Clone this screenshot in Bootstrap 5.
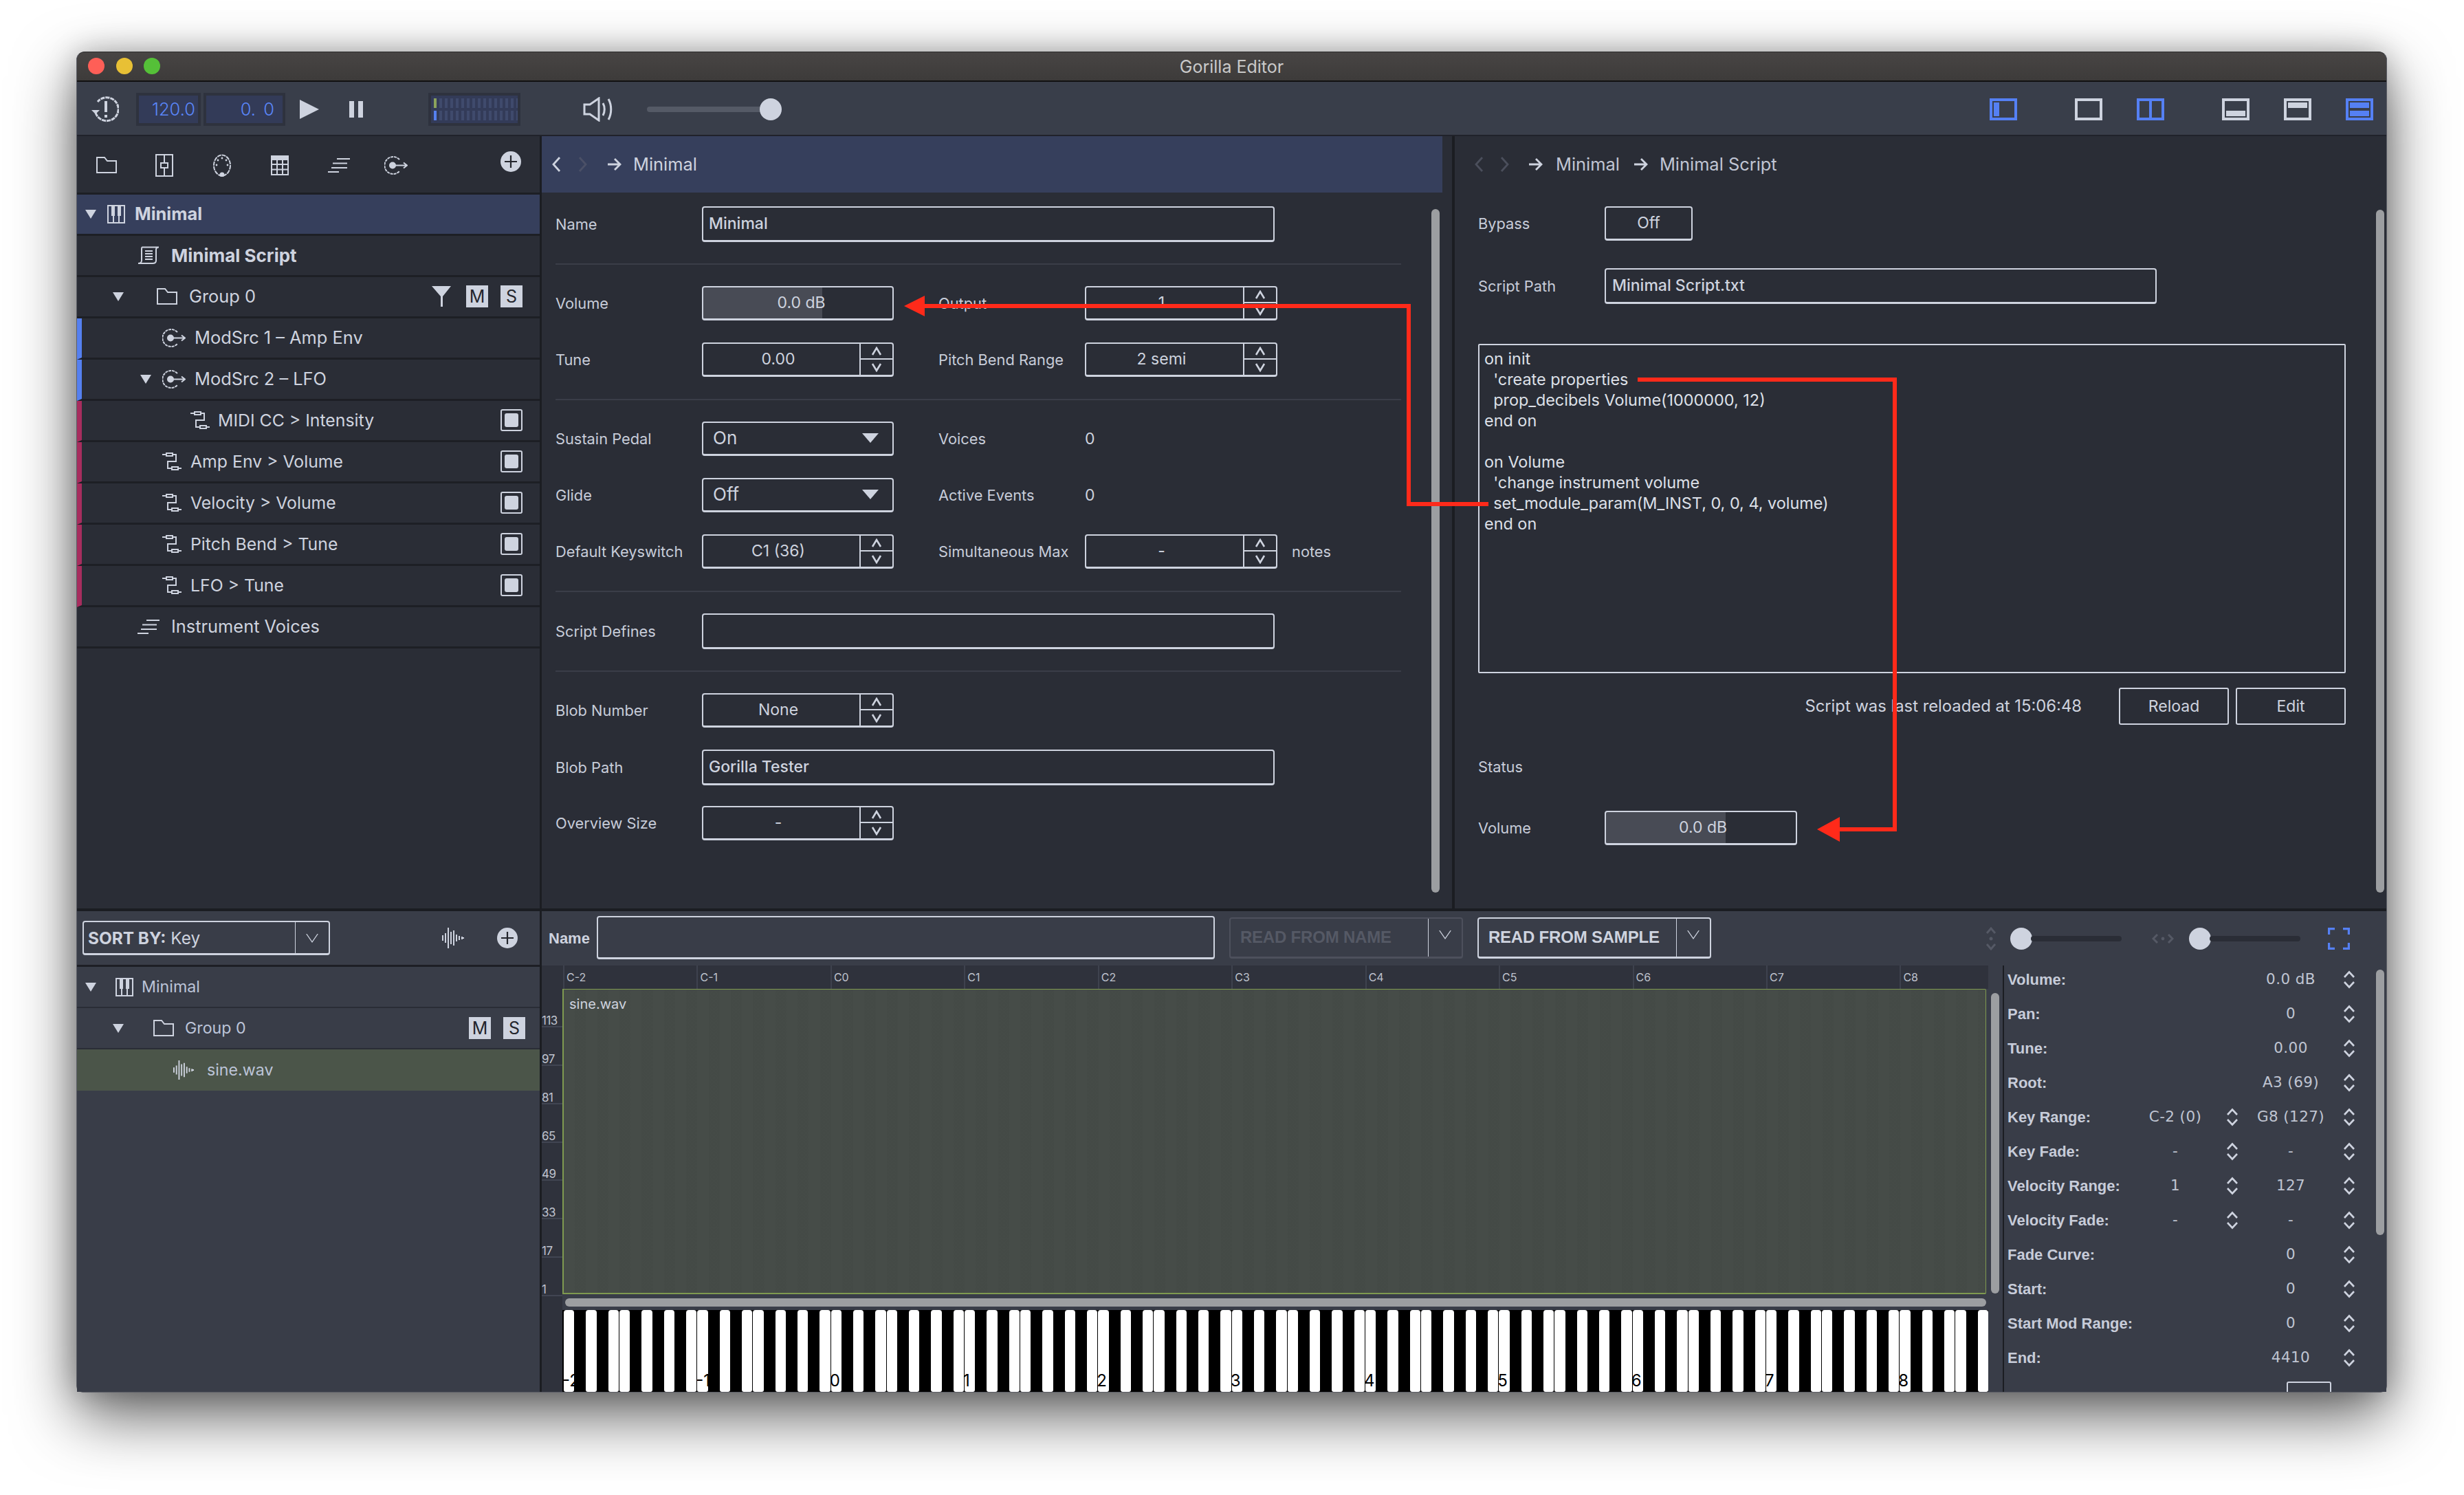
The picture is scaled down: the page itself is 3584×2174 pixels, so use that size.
<!DOCTYPE html>
<html lang="en">
<head>
  <meta charset="UTF-8">
  <title>Gorilla Editor</title>
  <link href="https://cdn.jsdelivr.net/npm/bootstrap@5.3.0/dist/css/bootstrap.min.css" rel="stylesheet">
  <style>
    html, body { margin: 0; height: 100%; background: #fff; overflow: hidden; }
    body { position: relative; font-family: Inter, "Noto Sans", sans-serif; color: #ced3df; font-size: 22px; }
    svg { display: block; flex-shrink: 0; }
    .ic-line { fill: none; stroke: #ced3df; stroke-width: 2; }
    .ic-fill { fill: #ced3df; }

    .app-win { position: absolute; left: 111px; top: 75px; width: 3361px; height: 1950px; border: 1px solid #5c5e66; border-top-color: #2a2a2a; border-radius: 12px 12px 10px 10px; box-shadow: 0 34px 90px rgba(0,0,0,.62), 0 0 40px rgba(0,0,0,.22); background: #2a2d36; }
    .title-bar { height: 43px; background: linear-gradient(#484544, #3d3b3a); border-bottom: 2px solid #111; display: grid; grid-template-columns: 1fr auto 1fr; align-items: center; font-size: 25px; color: #c9c9c9; border-radius: 11px 11px 0 0; }
    .title-bar > div:nth-child(2) { padding-top: 3px; }
    .lights { padding-left: 16px; gap: 16.5px; }
    .light { width: 24px; height: 24px; }
    .top-tools { height: 79px; background: #393e4a; border-bottom: 2px solid #20222a; padding: 3px 19px 0 0; }

    .tool-clock { margin-left: 21px; }
    .num-box { height: 48px; background: #2e323e; padding: 4px; font-size: 25.5px; color: #5a86f8; font-weight: 300; }
    .num-box > div { height: 100%; background: #333b58; text-align: right; line-height: 40px; }
    .tempo { width: 94px; margin-left: 25px; }
    .tempo > div { padding-right: 4px; }
    .beat { width: 119px; margin-left: 4px; word-spacing: 4px; }
    .beat > div { padding-right: 12px; }
    .tool-play { margin-left: 21px; }
    .tool-pause { margin-left: 44px; }
    .meter-box { width: 134px; height: 48px; margin-left: 94px; background: #2e323e; padding: 4px; }
    .meter-in { height: 40px; background: #333b58; padding: 4px 0 4px 4px; gap: 4px; }
    .meter-row { height: 14px; background: repeating-linear-gradient(90deg, #3f4a6c 0 4px, transparent 4px 8px); }
    .meter-row i { display: block; width: 4px; height: 14px; }
    .tool-vol { margin-left: 91px; }
    .vol-slider { margin-left: 47px; width: 196px; }
    .vol-track { width: 180px; height: 8px; background: #555a66; border-radius: 4px; }
    .knob { width: 32px; height: 32px; background: #ced3df; }
    .vol-slider .knob { margin-left: -16px; }
    .gap-l { margin-left: 84px; }
    .gap-s { margin-left: 50px; }

    .main-row { height: 1124px; }
    .split-v { width: 3px; background: #1b1d22; flex-shrink: 0; }
    .split-m { width: 4px; background: #1b1d22; flex-shrink: 0; }
    .split-h { height: 4px; background: #1b1d22; }
    .left-col { width: 673px; flex-shrink: 0; }
    .tree-tools { height: 85px; padding-left: 28px; position: relative; border-bottom: 3px solid #1d1f25; }
    .tree-tools svg { margin-top: 3px; }
    .tree-row { height: 60px; border-bottom: 3px solid #1d1f25; }
    .tree-row.on { background: #363f5c; font-weight: 700; }
    .tree-row.strong { font-weight: 700; font-size: 26px; }
    .tree-row { font-size: 25.4px; color: #ced3df; white-space: nowrap; }
    .tree-row.tight { font-size: 24.8px; }
    .mark-blue { border-left: 7px solid #5580f0; }
    .mark-red { border-left: 7px solid #a72d5e; }
    .tri { width: 0; height: 0; border-left: 8px solid transparent; border-right: 8px solid transparent; border-top: 13px solid #ced3df; flex-shrink: 0; }
    .sq-btn { width: 32px; height: 32px; background: #ced3df; color: #24262d; text-align: center; line-height: 32px; font-size: 25px; font-weight: 400; }
    .tog { width: 32px; height: 32px; border: 2px solid #ced3df; border-radius: 3px; padding: 4px; }
    .tog i { display: block; width: 100%; height: 100%; background: #ced3df; border-radius: 3px; }
    .row-end { margin-left: auto; margin-right: 25px; gap: 18px; }
    .funnel-gap { margin-right: 4px; }

    .mid-col { width: 1324px; flex-shrink: 0; }
    .right-col { flex-grow: 1; }
    .crumb-bar { height: 82px; width: 1310px; background: #363f5c; padding-left: 14px; font-size: 25.4px; }
    .crumb-bar.plain { background: transparent; width: auto; padding-left: 28px; color: #c0c5d3; }
    .form-wrap { padding: 20px 0 0 20px; }
    .f-row { margin-bottom: 32px; height: 50px; }
    .f-row.tall { height: 52px; }
    .f-label { width: 213px; flex-shrink: 0; font-size: 21.8px; color: #c7ccd9; white-space: nowrap; }
    .f-rule { height: 2px; width: 1230px; background: #3a3d48; margin: -1px 0 31px; }
    .f-rule.low { margin-top: 1px; }
    .f-box { border: 2px solid #ced3df; border-bottom-width: 3px; border-radius: 4px; font-size: 23px; line-height: 1; }
    .f-text { width: 833px; height: 100%; padding-left: 8px; font-weight: 500; }
    .f-sel { width: 279px; height: 100%; padding: 0 20px 0 14px; font-size: 26px; }
    .sel-tri { border-left-width: 12px; border-right-width: 12px; border-top-width: 14px; }
    .f-spin { width: 280px; height: 100%; }
    .spin-val { flex-grow: 1; text-align: center; padding-right: 9px; }
    .spin-btns { width: 48px; border-left: 2px solid #ced3df; }
    .spin-btns > div { flex: 1 1 0; }
    .spin-btns > div:first-child { border-bottom: 2px solid #ced3df; }
    .f-bar { width: 279px; height: 100%; background: linear-gradient(90deg, #484b55 0 63%, transparent 63%); padding-left: 10px; font-size: 23px; }
    .col-two { margin-left: 65px; }
    .f-note { margin-left: 21px; font-size: 21.8px; color: #c7ccd9; }
    .f-plain { font-size: 23px; }

    .r-form { padding: 20px 59px 0 34px; }
    .r-row { margin-bottom: 40px; height: 50px; }
    .r-btn { width: 128px; height: 100%; }
    .r-text { width: 803px; height: 52px; padding-left: 9px; font-weight: 500; }
    .script-box { height: 479px; margin-top: 58px; border: 2px solid #ced3df; border-radius: 2px; padding: 5px 7px; font-size: 23.4px; line-height: 30px; white-space: pre; color: #dde0e8; }
    .script-foot { margin-top: 21px; height: 54px; gap: 10px; }
    .script-note { margin-right: 44px; font-size: 23.8px; }
    .foot-btn { width: 160px; height: 100%; padding: 0; background: transparent; border: 2px solid #ced3df; border-radius: 3px; color: #ced3df; font-size: 23px; }
    .status-line { margin-top: 46px; height: 30px; }
    .vol-line { margin-top: 49px; height: 50px; }
    .r-bar { width: 280px; height: 100%; background: linear-gradient(90deg, #484b55 0 63%, transparent 63%); padding-left: 106px; }

    .thumb { position: absolute; background: #9c9ea1; border-radius: 6px; width: 12px; }
    .thumb-mid { left: 2082px; top: 304px; height: 994px; }
    .thumb-right { left: 3456px; top: 305px; height: 993px; }
    .thumb-props { left: 3456px; top: 1410px; height: 386px; }
    .thumb-grid { left: 2896px; top: 1444px; height: 437px; }

    .bottom-row { flex-grow: 1; background: #393d48; min-height: 0; }
    .bot-left { width: 673px; flex-shrink: 0; }
    .bot-tools { height: 81px; border-bottom: 3px solid #1d1f25; padding-left: 8px; }
    .drop { border: 2px solid #ced3df; border-bottom-width: 3px; border-radius: 4px; white-space: nowrap; }
    .sort-drop { width: 360px; height: 50px; font-size: 24.4px; padding-left: 6px; }
    .drop-arrow { border-left: 1px solid #ced3df; height: 100%; margin-left: auto; width: 49px; flex-shrink: 0; }
    .bot-row { height: 60px; border-bottom: 2px solid #2a2d36; font-size: 23.2px; color: #bcc4d8; white-space: nowrap; }
    .bot-row.sel { background: #4b5549; border-bottom: 0; }

    .bot-right { flex-grow: 1; min-width: 0; }
    .edit-tools { height: 79px; padding-left: 10px; flex-shrink: 0; }
    .name-lab { font-family: "Liberation Sans", sans-serif; font-size: 22px; }
    .name-box { width: 899px; height: 63px; margin-left: 10px; margin-top: -2px; }
    .read-drop { width: 340px; height: 60px; font-weight: 700; font-size: 24px; font-family: "Liberation Sans", sans-serif; padding-left: 14px; margin-top: -2px; letter-spacing: -.2px; }
    .read-drop.off { margin-left: 21px; border-color: #4d505c; color: #555965; }
    .read-drop.off .drop-arrow { border-left-color: #ced3df; }
    .read-drop.act { margin-left: 21px; }
    .read-drop .drop-arrow { width: 49px; }
    .zoom-slider { width: 162px; }
    .zoom-track { height: 8px; background: #2a2d36; border-radius: 4px; flex-grow: 1; margin-left: -2px; }

    .edit-body { flex-grow: 1; min-height: 0; }
    .key-col { width: 30px; flex-shrink: 0; background: #2f323c; font-size: 17px; color: #bfc3ce; }
    .key-col .key-head { height: 34px; }
    .key-num { height: 55.8px; border-bottom: 2px solid #414552; line-height: .7; padding: 0 0 1px 0; letter-spacing: -.5px; }
    .edit-main { width: 2074px; flex-shrink: 0; overflow: hidden; }
    .ruler { height: 34px; background: #2f323c; font-size: 16px; color: #bfc3ce; padding-left: 1px; }
    .ruler > div { width: 194.45px; flex-shrink: 0; border-left: 2px solid #3e424e; padding-left: 3px; }
    .grid-area { height: 444px; margin-right: 3px; border: 2px solid #7f9a50; border-top-width: 1px; border-right-width: 1px; border-radius: 0 2px 2px 0; background-color: #454b47; background-image: repeating-linear-gradient(90deg, rgba(255,255,255,.007) 0 16.2px, rgba(0,0,0,.009) 16.2px 32.4px); font-size: 20px; padding: 6px 8px; color: #ced3df; }
    .pad-hs { height: 23px; padding: 6px 3px 5px 4px; }
    .hs-thumb { height: 12px; background: #9c9ea1; border-radius: 6px; }
    .piano { height: 119px; background: #000; padding-left: 2px; color: #000; font-size: 24px; }
    .p-key { width: 15.3px; height: 100%; background: #fff; border-radius: 4px 4px 3px 3px; flex-shrink: 0; white-space: nowrap; padding-bottom: 2px; line-height: 1.2; }
    .p-label { display: inline-block; margin-left: -2px; }
    .scroll-col { width: 21px; flex-shrink: 0; }
    .split-p { width: 2px; background: #1b1d22; flex-shrink: 0; }
    .props { flex-grow: 1; overflow: hidden; position: relative; padding-left: 5px; margin-top: -5px; }
    .prop-row { display: grid; grid-template-columns: 170px 148px 18px 152px 18px; height: 50px; align-items: center; white-space: nowrap; }
    .prop-name { font-family: "Liberation Sans", sans-serif; font-weight: 700; font-size: 22px; color: #c7ccd9; }
    .prop-val { font-family: "DejaVu Sans", sans-serif; font-size: 21.5px; letter-spacing: .4px; color: #bfc4d1; text-align: center; }
    .prop-val.two { grid-column: 4; }
    .ud { grid-column: 5; }
    .ud.first { grid-column: 3; }
    .cut-box { position: absolute; left: 411px; top: 610px; width: 65px; height: 40px; border: 2px solid #ced3df; border-radius: 3px; }
    .arrows { position: absolute; left: 0; top: 0; z-index: 5; pointer-events: none; }
  </style>
</head>
<body>

  <svg width="0" height="0" style="position:absolute">
    <symbol id="i-folder" viewBox="0 0 30 24"><path class="ic-line" d="M1 1H12L16 6H29V23H1Z"/></symbol>
    <symbol id="i-fader" viewBox="0 0 26 33"><path class="ic-line" d="M1 1H25V32H1ZM13 1V13M13 20V32M8 13H18V20H8Z"/></symbol>
    <symbol id="i-midi" viewBox="0 0 26 33"><ellipse class="ic-line" cx="13" cy="16.5" rx="12" ry="15" stroke-dasharray="6 1"/><circle class="ic-fill" cx="13" cy="30" r="3.5"/><circle class="ic-fill" cx="13" cy="6" r="1.4"/><circle class="ic-fill" cx="7" cy="9" r="1.4"/><circle class="ic-fill" cx="19" cy="9" r="1.4"/><circle class="ic-fill" cx="5" cy="16" r="1.4"/><circle class="ic-fill" cx="21" cy="16" r="1.4"/></symbol>
    <symbol id="i-table" viewBox="0 0 26 29"><rect class="ic-fill" x="0" y="0" width="26" height="7"/><path class="ic-line" d="M1 6H25V28H1ZM1 13H25M1 20.5H25M9 6V28M17 6V28"/></symbol>
    <symbol id="i-lines" viewBox="0 0 32 23"><path class="ic-line" d="M13 2H32M7 8.5H28M5 15H28M0 21H16" stroke-width="2.4"/></symbol>
    <symbol id="i-mod" viewBox="0 0 34 27"><path class="ic-line" stroke-dasharray="4 1" d="M22 5A12.5 12.5 0 1 0 22 22"/><circle class="ic-fill" cx="12" cy="13.5" r="5"/><path class="ic-line" d="M12 13.5H32M28 9.5L33 13.5L28 17.5"/></symbol>
    <symbol id="i-link" viewBox="0 0 28 26"><path class="ic-line" d="M0 3H5M6 1H15V5H6ZM15 3H20V13H8V23H13M14 21H23V25H14ZM23 23H28" stroke-width="1.8"/></symbol>
    <symbol id="i-script" viewBox="0 0 32 26"><path class="ic-line" d="M7 1.5H31C28 1.5 27 3 27 5V21C27 23.5 25 25 22 25H1C4 25 6 23 6 21V4C6 2.5 6.5 1.5 7 1.5ZM11 7H22M11 11H22M11 15H22M11 19H22"/></symbol>
    <symbol id="i-piano" viewBox="0 0 26 27"><path class="ic-line" d="M1 1H25V26H1ZM9 16V26M17 16V26"/><path class="ic-fill" d="M6 1H11V16H6ZM15 1H20V16H15Z"/></symbol>
    <symbol id="i-wave" viewBox="0 0 32 30"><path class="ic-line" stroke-width="1.6" d="M1 11V19M5 8V22M9 0V30M13 6V24M17 4V26M21 10V20M25 12V18M29 13V17M31 14V16"/></symbol>
    <symbol id="i-plus" viewBox="0 0 30 30"><circle class="ic-fill" cx="15" cy="15" r="15"/><path d="M15 6V24M6 15H24" stroke="#24262d" stroke-width="2.2"/></symbol>
    <symbol id="i-funnel" viewBox="0 0 28 30"><path class="ic-fill" d="M0 0H28L16 15V30H13V15Z"/></symbol>
    <symbol id="i-up" viewBox="0 0 16 14"><path d="M2 12L8 2L14 12" fill="none" stroke="#ced3df" stroke-width="2.6"/></symbol>
    <symbol id="i-down" viewBox="0 0 16 14"><path d="M2 2L8 12L14 2" fill="none" stroke="#ced3df" stroke-width="2.6"/></symbol>
    <symbol id="i-ud" viewBox="0 0 18 27"><path d="M2 10L9 2.5L16 10M2 17L9 24.5L16 17" fill="none" stroke="#ced3df" stroke-width="2.6"/></symbol>
    <symbol id="i-vee" viewBox="0 0 22 24"><path d="M2 2L11 22L20 2" fill="none" stroke="#ced3df" stroke-width="1.6"/></symbol>
    <symbol id="i-back" viewBox="0 0 14 24"><path d="M12 2L3 12L12 22" fill="none" stroke="currentColor" stroke-width="2.8"/></symbol>
    <symbol id="i-fwd" viewBox="0 0 14 24"><path d="M2 2L11 12L2 22" fill="none" stroke="currentColor" stroke-width="2.8"/></symbol>
    <symbol id="i-right" viewBox="0 0 22 22"><path d="M1 11H19M11 3L19 11L11 19" fill="none" stroke="#ced3df" stroke-width="2.8"/></symbol>
  </svg>

  <div class="app-win d-flex flex-column">

    <div class="title-bar">
      <div class="lights d-flex">
        <div class="light rounded-circle" style="background:#fe5f57"></div>
        <div class="light rounded-circle" style="background:#e8c035"></div>
        <div class="light rounded-circle" style="background:#55c038"></div>
      </div>
      <div>Gorilla Editor</div>
      <div></div>
    </div>

    <div class="top-tools d-flex align-items-center">
      <svg class="tool-clock" width="40" height="42" viewBox="0 0 40 42">
        <path d="M6 26A17 17 0 1 0 9 10" fill="none" stroke="#ced3df" stroke-width="3" stroke-dasharray="6 1"/>
        <path class="ic-fill" d="M0 22L6 28L12 22Z"/>
        <path class="ic-fill" d="M19 9H23V25H19ZM19 29H23V33H19Z"/>
      </svg>
      <div class="num-box tempo"><div>120.0</div></div>
      <div class="num-box beat"><div>0. 0</div></div>
      <svg class="tool-play" width="28" height="28" viewBox="0 0 28 28"><path class="ic-fill" d="M0 0L28 14L0 28Z"/></svg>
      <svg class="tool-pause" width="21" height="24" viewBox="0 0 21 24"><path class="ic-fill" d="M0 0H7V24H0ZM13 0H20V24H13Z"/></svg>
      <div class="meter-box">
        <div class="meter-in d-flex flex-column">
          <div class="meter-row"><i style="background:#8ba35c"></i></div>
          <div class="meter-row"><i style="background:#5580f0"></i></div>
        </div>
      </div>
      <svg class="tool-vol" width="46" height="36" viewBox="0 0 46 36">
        <path d="M2 11H10L23 2V34L10 25H2Z" fill="none" stroke="#ced3df" stroke-width="3"/>
        <path d="M29 9C32 14 32 22 29 27M37 3C42 12 42 24 37 33" fill="none" stroke="#ced3df" stroke-width="3"/>
      </svg>
      <div class="vol-slider d-flex align-items-center">
        <div class="vol-track"></div>
        <div class="knob rounded-circle"></div>
      </div>

      <svg class="ms-auto" width="40" height="32" viewBox="0 0 40 32"><rect x="2" y="2" width="36" height="28" fill="none" stroke="#5580f4" stroke-width="4"/><rect x="6" y="6" width="8" height="20" fill="#5580f4"/></svg>
      <svg class="gap-l" width="40" height="32" viewBox="0 0 40 32"><rect x="2" y="2" width="36" height="28" fill="none" stroke="#ced3df" stroke-width="4"/></svg>
      <svg class="gap-s" width="40" height="32" viewBox="0 0 40 32"><rect x="2" y="2" width="36" height="28" fill="none" stroke="#5580f4" stroke-width="4"/><rect x="18" y="2" width="4" height="28" fill="#5580f4"/></svg>
      <svg class="gap-l" width="40" height="32" viewBox="0 0 40 32"><rect x="2" y="2" width="36" height="28" fill="none" stroke="#ced3df" stroke-width="4"/><rect x="6" y="18" width="28" height="8" fill="#ced3df"/></svg>
      <svg class="gap-s" width="40" height="32" viewBox="0 0 40 32"><rect x="2" y="2" width="36" height="28" fill="none" stroke="#ced3df" stroke-width="4"/><rect x="6" y="6" width="28" height="8" fill="#ced3df"/></svg>
      <svg class="gap-s" width="40" height="32" viewBox="0 0 40 32"><rect x="2" y="2" width="36" height="28" fill="none" stroke="#5580f4" stroke-width="4"/><rect x="6" y="6" width="28" height="8" fill="#5580f4"/><rect x="6" y="18" width="28" height="8" fill="#5580f4"/></svg>
    </div>

    <div class="main-row d-flex">
      <!-- instrument tree -->
      <div class="left-col">
        <div class="tree-tools d-flex align-items-center">
          <svg width="30" height="24"><use href="#i-folder"/></svg>
          <svg width="26" height="33" style="margin-left:56px"><use href="#i-fader"/></svg>
          <svg width="26" height="33" style="margin-left:58px"><use href="#i-midi"/></svg>
          <svg width="26" height="29" style="margin-left:58px"><use href="#i-table"/></svg>
          <svg width="32" height="23" style="margin-left:57px"><use href="#i-lines"/></svg>
          <svg width="34" height="27" style="margin-left:50px"><use href="#i-mod"/></svg>
          <svg class="ms-auto" width="30" height="30" style="margin-right:27px;margin-top:-7px"><use href="#i-plus"/></svg>
        </div>
        <div class="tree-row on d-flex align-items-center" style="padding-left:12px">
          <div class="tri"></div>
          <svg width="26" height="27" style="margin:0 14px 0 16px"><use href="#i-piano"/></svg>
          <span>Minimal</span>
        </div>
        <div class="tree-row strong d-flex align-items-center" style="padding-left:88px">
          <svg width="32" height="26" style="margin-right:17px"><use href="#i-script"/></svg>
          <span>Minimal Script</span>
        </div>
        <div class="tree-row d-flex align-items-center" style="padding-left:52px">
          <div class="tri"></div>
          <svg width="30" height="24" style="margin:0 17px 0 48px"><use href="#i-folder"/></svg>
          <span>Group 0</span>
          <div class="row-end d-flex align-items-center">
            <svg class="funnel-gap" width="28" height="30"><use href="#i-funnel"/></svg>
            <div class="sq-btn">M</div>
            <div class="sq-btn">S</div>
          </div>
        </div>
        <div class="tree-row mark-blue d-flex align-items-center" style="padding-left:117px">
          <svg width="34" height="27" style="margin-right:13px"><use href="#i-mod"/></svg>
          <span>ModSrc 1 – Amp Env</span>
        </div>
        <div class="tree-row mark-blue d-flex align-items-center" style="padding-left:85px">
          <div class="tri"></div>
          <svg width="34" height="27" style="margin:0 13px 0 16px"><use href="#i-mod"/></svg>
          <span>ModSrc 2 – LFO</span>
        </div>
        <div class="tree-row tight mark-red d-flex align-items-center" style="padding-left:158px">
          <svg width="28" height="26" style="margin-right:12px"><use href="#i-link"/></svg>
          <span>MIDI CC &gt; Intensity</span>
          <div class="row-end"><div class="tog"><i></i></div></div>
        </div>
        <div class="tree-row tight mark-red d-flex align-items-center" style="padding-left:117px">
          <svg width="28" height="26" style="margin-right:13px"><use href="#i-link"/></svg>
          <span>Amp Env &gt; Volume</span>
          <div class="row-end"><div class="tog"><i></i></div></div>
        </div>
        <div class="tree-row tight mark-red d-flex align-items-center" style="padding-left:117px">
          <svg width="28" height="26" style="margin-right:13px"><use href="#i-link"/></svg>
          <span>Velocity &gt; Volume</span>
          <div class="row-end"><div class="tog"><i></i></div></div>
        </div>
        <div class="tree-row tight mark-red d-flex align-items-center" style="padding-left:117px">
          <svg width="28" height="26" style="margin-right:13px"><use href="#i-link"/></svg>
          <span>Pitch Bend &gt; Tune</span>
          <div class="row-end"><div class="tog"><i></i></div></div>
        </div>
        <div class="tree-row tight mark-red d-flex align-items-center" style="padding-left:117px">
          <svg width="28" height="26" style="margin-right:13px"><use href="#i-link"/></svg>
          <span>LFO &gt; Tune</span>
          <div class="row-end"><div class="tog"><i></i></div></div>
        </div>
        <div class="tree-row d-flex align-items-center" style="padding-left:88px">
          <svg width="32" height="23" style="margin-right:17px"><use href="#i-lines"/></svg>
          <span>Instrument Voices</span>
        </div>
      </div>

      <div class="split-v"></div>

      <!-- instrument properties -->
      <div class="mid-col">
        <div class="crumb-bar d-flex align-items-center">
          <svg width="14" height="24" style="color:#ced3df"><use href="#i-back"/></svg>
          <svg width="14" height="24" style="margin-left:25px;color:#4b5067"><use href="#i-fwd"/></svg>
          <svg width="22" height="22" style="margin:0 16px 0 28px"><use href="#i-right"/></svg>
          <span>Minimal</span>
        </div>
        <div class="form-wrap">
          <div class="f-row tall d-flex align-items-center">
            <div class="f-label">Name</div>
            <div class="f-box f-text d-flex align-items-center">Minimal</div>
          </div>
          <div class="f-rule"></div>

          <div class="f-row d-flex align-items-center">
            <div class="f-label">Volume</div>
            <div class="f-box f-bar d-flex align-items-center justify-content-center">0.0 dB</div>
            <div class="f-label col-two">Output</div>
            <div class="f-box f-spin d-flex">
              <div class="spin-val align-self-center">1</div>
              <div class="spin-btns d-flex flex-column">
                <div class="d-flex align-items-center justify-content-center"><svg width="16" height="14"><use href="#i-up"/></svg></div>
                <div class="d-flex align-items-center justify-content-center"><svg width="16" height="14"><use href="#i-down"/></svg></div>
              </div>
            </div>
          </div>
          <div class="f-row d-flex align-items-center">
            <div class="f-label">Tune</div>
            <div class="f-box f-spin d-flex" style="width:279px">
              <div class="spin-val align-self-center">0.00</div>
              <div class="spin-btns d-flex flex-column">
                <div class="d-flex align-items-center justify-content-center"><svg width="16" height="14"><use href="#i-up"/></svg></div>
                <div class="d-flex align-items-center justify-content-center"><svg width="16" height="14"><use href="#i-down"/></svg></div>
              </div>
            </div>
            <div class="f-label col-two">Pitch Bend Range</div>
            <div class="f-box f-spin d-flex">
              <div class="spin-val align-self-center">2 semi</div>
              <div class="spin-btns d-flex flex-column">
                <div class="d-flex align-items-center justify-content-center"><svg width="16" height="14"><use href="#i-up"/></svg></div>
                <div class="d-flex align-items-center justify-content-center"><svg width="16" height="14"><use href="#i-down"/></svg></div>
              </div>
            </div>
          </div>
          <div class="f-rule low"></div>

          <div class="f-row d-flex align-items-center">
            <div class="f-label">Sustain Pedal</div>
            <div class="f-box f-sel d-flex align-items-center justify-content-between"><span>On</span><div class="tri sel-tri"></div></div>
            <div class="f-label col-two">Voices</div>
            <div class="f-plain">0</div>
          </div>
          <div class="f-row d-flex align-items-center">
            <div class="f-label">Glide</div>
            <div class="f-box f-sel d-flex align-items-center justify-content-between"><span>Off</span><div class="tri sel-tri"></div></div>
            <div class="f-label col-two">Active Events</div>
            <div class="f-plain">0</div>
          </div>
          <div class="f-row d-flex align-items-center">
            <div class="f-label">Default Keyswitch</div>
            <div class="f-box f-spin d-flex" style="width:279px">
              <div class="spin-val align-self-center">C1 (36)</div>
              <div class="spin-btns d-flex flex-column">
                <div class="d-flex align-items-center justify-content-center"><svg width="16" height="14"><use href="#i-up"/></svg></div>
                <div class="d-flex align-items-center justify-content-center"><svg width="16" height="14"><use href="#i-down"/></svg></div>
              </div>
            </div>
            <div class="f-label col-two">Simultaneous Max</div>
            <div class="f-box f-spin d-flex">
              <div class="spin-val align-self-center">-</div>
              <div class="spin-btns d-flex flex-column">
                <div class="d-flex align-items-center justify-content-center"><svg width="16" height="14"><use href="#i-up"/></svg></div>
                <div class="d-flex align-items-center justify-content-center"><svg width="16" height="14"><use href="#i-down"/></svg></div>
              </div>
            </div>
            <div class="f-note">notes</div>
          </div>
          <div class="f-rule low"></div>

          <div class="f-row tall d-flex align-items-center">
            <div class="f-label">Script Defines</div>
            <div class="f-box f-text"></div>
          </div>
          <div class="f-rule"></div>

          <div class="f-row d-flex align-items-center">
            <div class="f-label">Blob Number</div>
            <div class="f-box f-spin d-flex" style="width:279px">
              <div class="spin-val align-self-center">None</div>
              <div class="spin-btns d-flex flex-column">
                <div class="d-flex align-items-center justify-content-center"><svg width="16" height="14"><use href="#i-up"/></svg></div>
                <div class="d-flex align-items-center justify-content-center"><svg width="16" height="14"><use href="#i-down"/></svg></div>
              </div>
            </div>
          </div>
          <div class="f-row tall d-flex align-items-center" style="margin-bottom:30px">
            <div class="f-label">Blob Path</div>
            <div class="f-box f-text d-flex align-items-center">Gorilla Tester</div>
          </div>
          <div class="f-row d-flex align-items-center">
            <div class="f-label">Overview Size</div>
            <div class="f-box f-spin d-flex" style="width:279px">
              <div class="spin-val align-self-center">-</div>
              <div class="spin-btns d-flex flex-column">
                <div class="d-flex align-items-center justify-content-center"><svg width="16" height="14"><use href="#i-up"/></svg></div>
                <div class="d-flex align-items-center justify-content-center"><svg width="16" height="14"><use href="#i-down"/></svg></div>
              </div>
            </div>
          </div>
        </div>
      </div>

      <div class="split-m"></div>

      <!-- script panel -->
      <div class="right-col">
        <div class="crumb-bar plain d-flex align-items-center">
          <svg width="14" height="24" style="color:#4b4f5c"><use href="#i-back"/></svg>
          <svg width="14" height="24" style="margin-left:24px;color:#4b4f5c"><use href="#i-fwd"/></svg>
          <svg width="22" height="22" style="margin:0 18px 0 27px"><use href="#i-right"/></svg>
          <span>Minimal</span>
          <svg width="22" height="22" style="margin:0 16px 0 20px"><use href="#i-right"/></svg>
          <span>Minimal Script</span>
        </div>
        <div class="r-form">
          <div class="r-row d-flex align-items-center">
            <div class="f-label" style="width:184px">Bypass</div>
            <div class="f-box r-btn d-flex align-items-center justify-content-center">Off</div>
          </div>
          <div class="r-row d-flex align-items-center" style="height:52px;margin-bottom:0">
            <div class="f-label" style="width:184px">Script Path</div>
            <div class="f-box r-text d-flex align-items-center">Minimal Script.txt</div>
          </div>
          <div class="script-box">on init
  'create properties
  prop_decibels Volume(1000000, 12)
end on

on Volume
  'change instrument volume
  set_module_param(M_INST, 0, 0, 4, volume)
end on</div>
          <div class="script-foot d-flex align-items-center justify-content-end">
            <div class="script-note">Script was last reloaded at 15:06:48</div>
            <button class="btn foot-btn">Reload</button>
            <button class="btn foot-btn">Edit</button>
          </div>
          <div class="status-line f-label d-flex align-items-center">Status</div>
          <div class="vol-line d-flex align-items-center">
            <div class="f-label" style="width:184px">Volume</div>
            <div class="f-box r-bar d-flex align-items-center">0.0 dB</div>
          </div>
        </div>
      </div>
    </div>

    <div class="split-h"></div>

    <div class="bottom-row d-flex">
      <div class="bot-left">
        <div class="bot-tools d-flex align-items-center">
          <div class="drop sort-drop d-flex align-items-center"><b>SORT BY:</b>&nbsp;Key
            <div class="drop-arrow d-flex align-items-center justify-content-center"><svg width="20" height="14" viewBox="0 0 22 24" preserveAspectRatio="none"><use href="#i-vee"/></svg></div>
          </div>
          <svg width="32" height="30" style="margin-left:163px"><use href="#i-wave"/></svg>
          <svg width="30" height="30" style="margin-left:48px"><use href="#i-plus"/></svg>
        </div>
        <div class="bot-row d-flex align-items-center" style="padding-left:12px">
          <div class="tri"></div>
          <svg width="26" height="27" style="margin:0 12px 0 28px"><use href="#i-piano"/></svg>
          <span>Minimal</span>
        </div>
        <div class="bot-row d-flex align-items-center" style="padding-left:52px">
          <div class="tri"></div>
          <svg width="30" height="24" style="margin:0 16px 0 43px"><use href="#i-folder"/></svg>
          <span>Group 0</span>
          <div class="row-end d-flex align-items-center" style="margin-right:21px">
            <div class="sq-btn">M</div>
            <div class="sq-btn">S</div>
          </div>
        </div>
        <div class="bot-row sel d-flex align-items-center" style="padding-left:140px">
          <svg width="30" height="30" style="margin-right:19px"><use href="#i-wave"/></svg>
          <span>sine.wav</span>
        </div>
      </div>

      <div class="split-v"></div>

      <div class="bot-right d-flex flex-column">
        <div class="edit-tools d-flex align-items-center">
          <b class="name-lab">Name</b>
          <div class="f-box name-box"></div>
          <div class="drop read-drop off d-flex align-items-center">READ FROM NAME
            <div class="drop-arrow d-flex align-items-center justify-content-center pb-2"><svg width="20" height="14" viewBox="0 0 22 24" preserveAspectRatio="none"><use href="#i-vee"/></svg></div>
          </div>
          <div class="drop read-drop act d-flex align-items-center">READ FROM SAMPLE
            <div class="drop-arrow d-flex align-items-center justify-content-center pb-2"><svg width="20" height="14" viewBox="0 0 22 24" preserveAspectRatio="none"><use href="#i-vee"/></svg></div>
          </div>

          <svg class="ms-auto" width="16" height="34" viewBox="0 0 16 34" style="margin-right:20px"><path d="M2 9L8 2L14 9M2 25L8 32L14 25" fill="none" stroke="#555965" stroke-width="3"/><circle cx="8" cy="17" r="2.5" fill="#555965"/></svg>
          <div class="zoom-slider d-flex align-items-center">
            <div class="knob rounded-circle"></div><div class="zoom-track"></div>
          </div>
          <svg width="32" height="14" viewBox="0 0 32 14" style="margin:0 22px 0 44px"><path d="M8 1L2 7L8 13M24 1L30 7L24 13" fill="none" stroke="#555965" stroke-width="3"/><circle cx="16" cy="7" r="2.4" fill="#555965"/></svg>
          <div class="zoom-slider d-flex align-items-center">
            <div class="knob rounded-circle"></div><div class="zoom-track"></div>
          </div>
          <svg width="32" height="32" viewBox="0 0 32 32" style="margin:0 53px 0 40px"><path d="M1.5 10V1.5H10M22 1.5H30.5V10M30.5 22V30.5H22M10 30.5H1.5V22" fill="none" stroke="#5580f4" stroke-width="3.4"/></svg>
        </div>

        <div class="edit-body d-flex">
          <div class="key-col">
            <div class="key-head"></div>
            <div class="key-num d-flex align-items-end">113</div>
            <div class="key-num d-flex align-items-end">97</div>
            <div class="key-num d-flex align-items-end">81</div>
            <div class="key-num d-flex align-items-end">65</div>
            <div class="key-num d-flex align-items-end">49</div>
            <div class="key-num d-flex align-items-end">33</div>
            <div class="key-num d-flex align-items-end">17</div>
            <div class="key-num d-flex align-items-end">1</div>
          </div>
          <div class="edit-main">
            <div class="ruler d-flex align-items-center">
              <div class="h-100 d-flex align-items-center">C-2</div>
              <div class="h-100 d-flex align-items-center">C-1</div>
              <div class="h-100 d-flex align-items-center">C0</div>
              <div class="h-100 d-flex align-items-center">C1</div>
              <div class="h-100 d-flex align-items-center">C2</div>
              <div class="h-100 d-flex align-items-center">C3</div>
              <div class="h-100 d-flex align-items-center">C4</div>
              <div class="h-100 d-flex align-items-center">C5</div>
              <div class="h-100 d-flex align-items-center">C6</div>
              <div class="h-100 d-flex align-items-center">C7</div>
              <div class="h-100 d-flex align-items-center">C8</div>
            </div>
            <div class="grid-area">sine.wav</div>
            <div class="pad-hs"><div class="hs-thumb"></div></div>
            <div class="piano d-flex" id="piano"></div>
          </div>
          <div class="scroll-col"></div>
          <div class="split-p"></div>
          <div class="props">
            <div class="prop-row"><div class="prop-name">Volume:</div><div class="prop-val two">0.0 dB</div><svg class="ud" width="18" height="27"><use href="#i-ud"/></svg></div>
            <div class="prop-row"><div class="prop-name">Pan:</div><div class="prop-val two">0</div><svg class="ud" width="18" height="27"><use href="#i-ud"/></svg></div>
            <div class="prop-row"><div class="prop-name">Tune:</div><div class="prop-val two">0.00</div><svg class="ud" width="18" height="27"><use href="#i-ud"/></svg></div>
            <div class="prop-row"><div class="prop-name">Root:</div><div class="prop-val two">A3 (69)</div><svg class="ud" width="18" height="27"><use href="#i-ud"/></svg></div>
            <div class="prop-row"><div class="prop-name">Key Range:</div><div class="prop-val">C-2 (0)</div><svg class="ud first" width="18" height="27"><use href="#i-ud"/></svg><div class="prop-val two">G8 (127)</div><svg class="ud" width="18" height="27"><use href="#i-ud"/></svg></div>
            <div class="prop-row"><div class="prop-name">Key Fade:</div><div class="prop-val">-</div><svg class="ud first" width="18" height="27"><use href="#i-ud"/></svg><div class="prop-val two">-</div><svg class="ud" width="18" height="27"><use href="#i-ud"/></svg></div>
            <div class="prop-row"><div class="prop-name">Velocity Range:</div><div class="prop-val">1</div><svg class="ud first" width="18" height="27"><use href="#i-ud"/></svg><div class="prop-val two">127</div><svg class="ud" width="18" height="27"><use href="#i-ud"/></svg></div>
            <div class="prop-row"><div class="prop-name">Velocity Fade:</div><div class="prop-val">-</div><svg class="ud first" width="18" height="27"><use href="#i-ud"/></svg><div class="prop-val two">-</div><svg class="ud" width="18" height="27"><use href="#i-ud"/></svg></div>
            <div class="prop-row"><div class="prop-name">Fade Curve:</div><div class="prop-val two">0</div><svg class="ud" width="18" height="27"><use href="#i-ud"/></svg></div>
            <div class="prop-row"><div class="prop-name">Start:</div><div class="prop-val two">0</div><svg class="ud" width="18" height="27"><use href="#i-ud"/></svg></div>
            <div class="prop-row"><div class="prop-name">Start Mod Range:</div><div class="prop-val two">0</div><svg class="ud" width="18" height="27"><use href="#i-ud"/></svg></div>
            <div class="prop-row"><div class="prop-name">End:</div><div class="prop-val two">4410</div><svg class="ud" width="18" height="27"><use href="#i-ud"/></svg></div>
            <div class="cut-box"></div>
          </div>
        </div>
      </div>
    </div>
  </div>

  <div class="thumb thumb-mid"></div>
  <div class="thumb thumb-right"></div>
  <div class="thumb thumb-props"></div>
  <div class="thumb thumb-grid"></div>

  <!-- annotation arrows, page coordinates -->
  <svg class="arrows" width="3584" height="2174" viewBox="0 0 3584 2174">
    <path d="M2165 733H2049V445H1340" fill="none" stroke="#ff2a1a" stroke-width="6"/>
    <path d="M1315 445L1345 430V460Z" fill="#ff2a1a"/>
    <path d="M2382 552H2756V1206H2670" fill="none" stroke="#ff2a1a" stroke-width="6"/>
    <path d="M2643 1206L2676 1188V1224Z" fill="#ff2a1a"/>
  </svg>

  <script>
    // white keys only, black keys are the gaps between them
    const piano = document.getElementById('piano');
    const gaps = [17.1, 17.1, 0.9, 17.1, 17.1, 17.1, 0.9];
    for (let oct = -2; oct <= 8; oct++) {
      gaps.forEach((g, i) => {
        const key = document.createElement('div');
        key.className = 'p-key d-flex align-items-end';
        if (i === 0) {
          const lab = document.createElement('span');
          lab.className = 'p-label';
          lab.textContent = oct;
          key.appendChild(lab);
        }
        key.style.marginRight = g + 'px';
        piano.appendChild(key);
      });
    }
  </script>
</body>
</html>
